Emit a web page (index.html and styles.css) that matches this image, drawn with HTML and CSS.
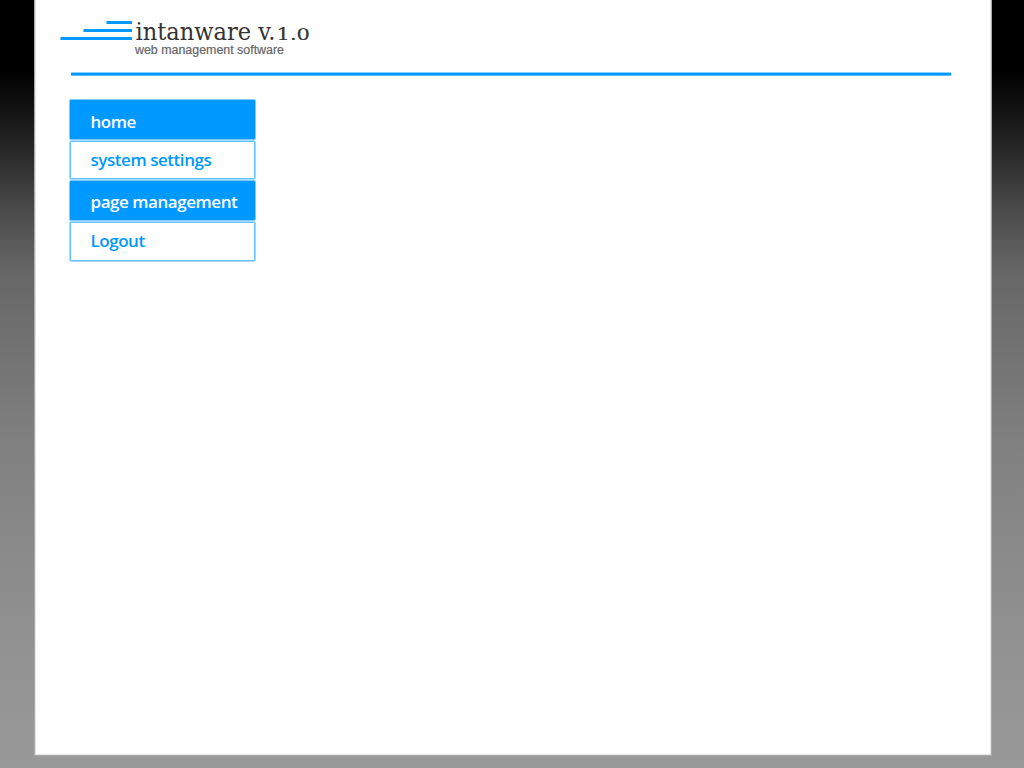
FILE: index.html
```html
<!DOCTYPE html>
<html lang="en">
<head>
<meta charset="utf-8">
<title>intanware v.1.0</title>
<link rel="stylesheet" href="styles.css">
</head>
<body>
<main class="panel">
  <header class="header">
    <svg class="logo" width="260" height="46" viewBox="0 0 260 46" role="img" aria-label="intanware v.1.0">
      <path class="logo-bars" d="M46.500 6H72v3H46.500zM23.500 14H72v3H23.500zM.5 22H72v3H.5z"/>
      <text class="logo-name" x="75.500" y="25" textLength="140" lengthAdjust="spacingAndGlyphs">intanware v.</text>
      <text class="logo-version" x="216.500" y="25" textLength="33.500" lengthAdjust="spacingAndGlyphs">1.0</text>
      <text class="logo-tag" x="75" y="39" textLength="149" lengthAdjust="spacingAndGlyphs">web management software</text>
    </svg>
  </header>
  <nav class="menu">
    <a class="item filled"><span class="label home">home</span></a>
    <a class="item outlined"><span class="label settings">system settings</span></a>
    <a class="item filled"><span class="label pages">page management</span></a>
    <a class="item outlined"><span class="label logout">Logout</span></a>
  </nav>
</main>
</body>
</html>
```

FILE: styles.css
```css
html {
  height: 100%;
}
body {
  margin: 0;
  height: 768px;
  overflow: hidden;
  background: linear-gradient(#000 0, #000 70px, #222 140px, #484848 205px, #666 270px, #808080 440px, #909090 620px, #999 768px);
  font-family: "Open Sans", "Noto Sans", sans-serif;
}
.panel {
  box-sizing: border-box;
  width: 958px;
  height: 756px;
  margin-left: 34px;
  background: #fff;
  border: 1px solid #aaa;
  border-top: 0;
  box-shadow: inset 0 -1px #e4e4e4, inset 1px 0 #e4e4e4, inset -1px 0 #e4e4e4;
}
.header {
  box-sizing: border-box;
  height: 76px;
  width: 880px;
  margin-left: 36px;
  padding-top: 15px;
  background: linear-gradient(#8cceff 0 1px, #0099ff 1px 3px, #59bcff 3px) 0 72px / 880px 4px no-repeat;
}
.logo {
  display: block;
  margin-left: -11px;
}
.logo-bars {
  fill: #0099ff;
}
.logo-name {
  font: 24px "DejaVu Serif", serif;
  fill: #333;
}
.logo-version {
  font: 17.5px "DejaVu Serif", serif;
  fill: #333;
  stroke: #333;
  stroke-width: 0.2px;
}
.logo-tag {
  font: 12px "Liberation Sans", sans-serif;
  fill: #666;
  stroke: #666;
  stroke-width: 0.2px;
}
.menu {
  width: 187px;
  margin: 23px 0 0 34px;
}
.item {
  box-sizing: border-box;
  display: flex;
  height: 40px;
  padding-left: 20.5px;
  border: 1px solid #80ccff;
  border-radius: 2px;
  font-size: 17px;
  font-weight: 600;
  line-height: 24px;
  letter-spacing: -0.45px;
}
.filled {
  height: 41px;
  background: #0099ff;
  color: #fff;
}
.outlined {
  background: #fff;
  color: #0099ff;
  border-color: #a6dbff;
  box-shadow: inset 0 0 0 1px #66c2ff;
}
.item + .outlined:last-child {
  height: 41px;
}
.label {
  display: block;
  white-space: nowrap;
}
.home {
  padding-top: 10px;
}
.settings {
  padding-top: 7px;
}
.pages {
  padding-top: 9px;
}
.logout {
  padding-top: 7px;
}
```
